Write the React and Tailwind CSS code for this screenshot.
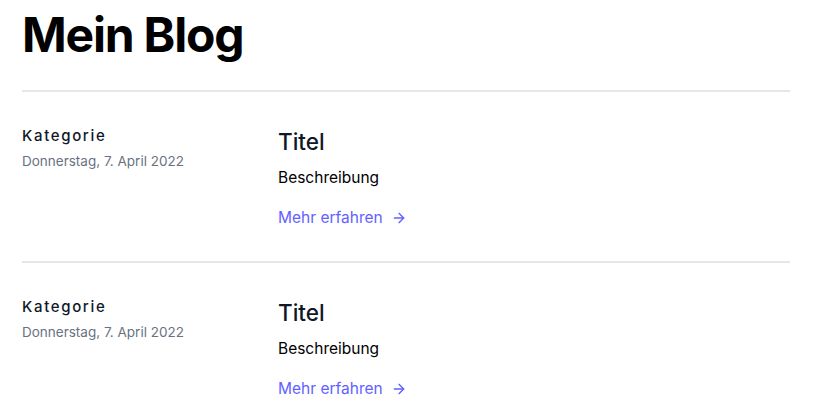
export default function App() {
  const posts = [
    { category: 'Kategorie', date: 'Donnerstag, 7. April 2022', title: 'Titel', description: 'Beschreibung' },
    { category: 'Kategorie', date: 'Donnerstag, 7. April 2022', title: 'Titel', description: 'Beschreibung' },
  ];

  return (
    <div className="min-h-screen bg-white font-['Inter',sans-serif] pl-[22px]">
      <div className="w-[768px]">
        <h1 className="pt-[9px] pb-[29px] text-[48px] leading-[52px] font-bold tracking-tight text-black">Mein Blog</h1>

        {posts.map((post, i) => (
          <div key={i} className="flex border-t-2 border-gray-200 pt-8 pb-[31px]">
            <div className="w-64 shrink-0 flex flex-col">
              <span className="text-[15px] leading-6 font-medium tracking-[0.11em] text-gray-900">{post.category}</span>
              <span className="mt-[3px] text-[13.5px] leading-5 text-gray-500">{post.date}</span>
            </div>
            <div className="flex-1">
              <h2 className="mt-0.5 text-[22.5px] leading-8 font-medium text-gray-900">{post.title}</h2>
              <p className="mt-2 text-[15.5px] leading-6 text-black">{post.description}</p>
              <a href="#" className="mt-4 inline-flex items-center text-[15.5px] leading-6 text-indigo-500">
                Mehr erfahren
                <svg className="ml-2 w-4 h-4" viewBox="0 0 24 24" fill="none" stroke="currentColor" strokeWidth="2" strokeLinecap="round" strokeLinejoin="round">
                  <path d="M5 12h14" />
                  <path d="M12 5l7 7-7 7" />
                </svg>
              </a>
            </div>
          </div>
        ))}
      </div>
    </div>
  );
}
